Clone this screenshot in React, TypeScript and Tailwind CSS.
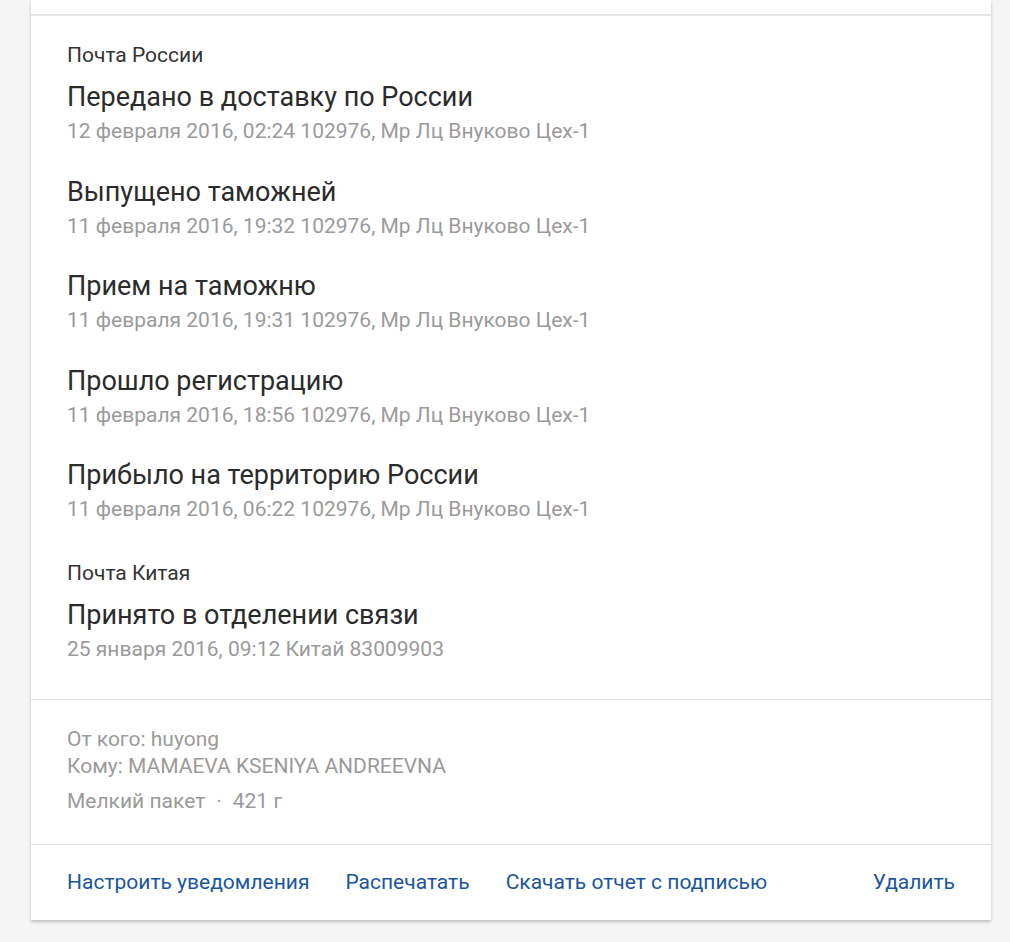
const font = { fontFamily: "Roboto, 'Noto Sans', sans-serif" };

type TrackEvent = { title: string; meta: string };

const russia: TrackEvent[] = [
  { title: "Передано в доставку по России", meta: "12 февраля 2016, 02:24 102976, Мр Лц Внуково Цех-1" },
  { title: "Выпущено таможней", meta: "11 февраля 2016, 19:32 102976, Мр Лц Внуково Цех-1" },
  { title: "Прием на таможню", meta: "11 февраля 2016, 19:31 102976, Мр Лц Внуково Цех-1" },
  { title: "Прошло регистрацию", meta: "11 февраля 2016, 18:56 102976, Мр Лц Внуково Цех-1" },
  { title: "Прибыло на территорию России", meta: "11 февраля 2016, 06:22 102976, Мр Лц Внуково Цех-1" },
];

const china: TrackEvent[] = [
  { title: "Принято в отделении связи", meta: "25 января 2016, 09:12 Китай 83009903" },
];

function Section({ label, events }: { label: string; events: TrackEvent[] }) {
  return (
    <div>
      <p className="text-[21px] leading-[28px] text-[#333]">{label}</p>
      <div className="mt-[10px] flex flex-col gap-[28.5px]">
        {events.map((e) => (
          <div key={e.title + e.meta}>
            <p className="text-[27px] leading-[36px] text-[#2b2b2b]">{e.title}</p>
            <p className="mt-[2px] text-[21px] leading-[28px] text-[#9a9a9a]">{e.meta}</p>
          </div>
        ))}
      </div>
    </div>
  );
}

export default function App() {
  return (
    <div className="min-h-[942px] bg-[#f5f5f5]" style={font}>
      <div className="ml-[31px] w-[960px] bg-white shadow-[0_2px_3px_rgba(0,0,0,0.22)]">
        <div className="h-[16px] border-b-2 border-[#e6e6e6]" />
        <div className="flex flex-col gap-[36px] px-[36px] pt-[25px] pb-[36px]">
          <Section label="Почта России" events={russia} />
          <Section label="Почта Китая" events={china} />
        </div>
        <div className="border-t border-[#e3e3e3] px-[36px] pt-[26px] pb-[29px] text-[21px] text-[#9a9a9a]">
          <p className="leading-[27px]">От кого: huyong</p>
          <p className="leading-[27px]">Кому: MAMAEVA KSENIYA ANDREEVNA</p>
          <p className="mt-[8px] leading-[27px]">
            Мелкий пакет<span className="mx-[11px]">·</span>421 г
          </p>
        </div>
        <div className="flex items-center border-t border-[#e3e3e3] px-[36px] pt-[23px] pb-[24px] text-[21px] leading-[28px] text-[#1a56a0]">
          <a className="mr-[36px]">Настроить уведомления</a>
          <a className="mr-[36px]">Распечатать</a>
          <a>Скачать отчет с подписью</a>
          <a className="ml-auto">Удалить</a>
        </div>
      </div>
    </div>
  );
}
